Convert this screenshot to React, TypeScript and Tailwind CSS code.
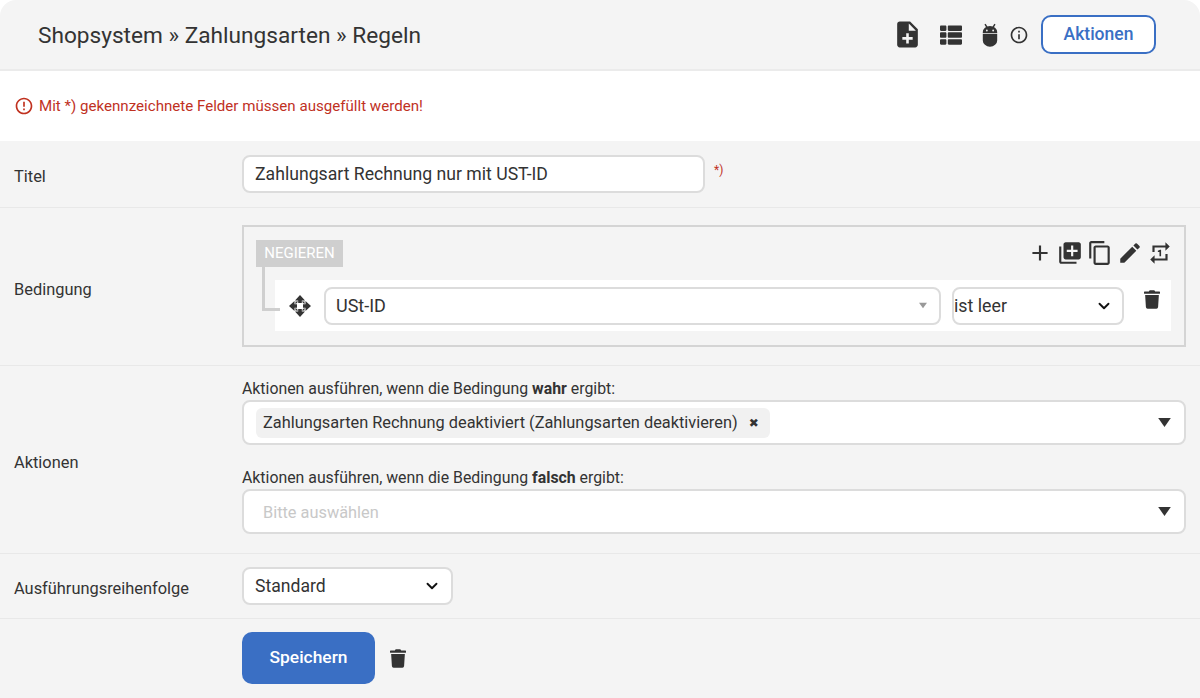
import React from "react";
import { MdNoteAdd, MdInfoOutline, MdAdd, MdLibraryAdd, MdContentCopy, MdEdit, MdRepeatOne, MdErrorOutline } from "react-icons/md";
import { FaThList, FaTrash } from "react-icons/fa";
import { ChevronDown } from "lucide-react";

const Bug = () => (
  <svg viewBox="0 0 20 26" className="w-[18px] h-[24px]" fill="#333">
    <path d="M2 10a8 7 0 0 1 16 0v1H2zM2 12h16v7a8 7 0 0 1-16 0z" />
    <path d="M4.5 1l2.5 4M15.500 1L13 5" stroke="#333" strokeWidth="1.600" />
    <circle cx="6.500" cy="8" r="1" fill="#f4f4f4" />
    <circle cx="13.500" cy="8" r="1" fill="#f4f4f4" />
  </svg>
);

const Move = () => (
  <svg viewBox="0 0 24 24" className="w-[24px] h-[24px] ml-[13px] mr-[12px] shrink-0" fill="#333">
    <path d="M12 1l5 5.500h-3.200V9h-3.600V6.500H7zM12 23l-5-5.500h3.200V15h3.600v2.500H17zM1 12l5.500-5v3.200H9v3.600H6.500V17zM23 12l-5.500 5v-3.200H15v-3.600h2.500V7z" />
    <path d="M7.500 7.500h2.800L7.500 10.300zM16.500 7.500v2.800l-2.800-2.800zM7.500 16.500v-2.800l2.800 2.800zM16.500 16.500h-2.800l2.800-2.800z" />
  </svg>
);

const Caret = ({ big }: { big?: boolean }) => (
  <svg viewBox="0 0 14 10" className={big ? "w-[13px] h-[9px]" : "w-[8px] h-[7px]"} fill={big ? "#333" : "#999"}>
    <path d="M0 0h14L7 10z" />
  </svg>
);

function Row({ label, className, children }: { label: string; className: string; children: React.ReactNode }) {
  return (
    <div className={`flex items-center border-b border-[#e8e8e8] ${className}`}>
      <div className="w-[242px] pl-[14px] pt-[7px] text-[16.400px] text-[#333] shrink-0">{label}</div>
      <div className="flex-1 min-w-0 pr-[14px]">{children}</div>
    </div>
  );
}

export default function App() {
  return (
    <div className="w-[1200px] h-[698px] overflow-hidden bg-[#f4f4f4] text-[#333] rounded-t-[16px]" style={{ fontFamily: "Roboto, sans-serif" }}>
      <header className="h-[71px] flex items-center justify-between border-b-2 border-[#ebebeb] pl-[38px] pr-[44px]">
        <h1 className="text-[22.650px] text-[#333] pt-[2px]">Shopsystem » Zahlungsarten » Regeln</h1>
        <div className="flex items-center">
          <MdNoteAdd className="w-[31px] h-[31px] text-[#333] mr-[17px]" />
          <FaThList className="w-[22px] h-[22px] text-[#333] mr-[19px]" />
          <Bug />
          <MdInfoOutline className="w-[20px] h-[20px] text-[#333] ml-[10px] mr-[12px]" />
          <button className="w-[115px] h-[39px] rounded-[10px] border-2 border-[#3a6fc4] bg-white text-[#3a6fc4] text-[17.500px] font-medium">Aktionen</button>
        </div>
      </header>

      <div className="h-[70px] bg-white flex items-center pl-[14px] text-[#c0311f] text-[15.100px]">
        <MdErrorOutline className="w-[20px] h-[20px] mr-[5px]" />
        Mit *) gekennzeichnete Felder müssen ausgefüllt werden!
      </div>

      <Row label="Titel" className="h-[67px]">
        <div className="flex items-start -mt-[1px]">
          <div className="w-[463px] h-[38px] rounded-[8px] border-2 border-[#dcdcdc] bg-white flex items-center pl-[11px] pt-[1px] text-[17.650px] text-[#333]">Zahlungsart Rechnung nur mit UST-ID</div>
          <span className="ml-[9px] mt-[6px] text-[12px] text-[#c0311f]">*)</span>
        </div>
      </Row>

      <Row label="Bedingung" className="h-[158px]">
        <div className="h-[122px] -mt-[1px] border-2 border-[#d4d4d4] pt-[13px] pl-[12px] pr-[14px] relative">
          <div className="flex items-center justify-between h-[27px]">
            <div className="w-[87px] h-[27px] bg-[#cfcfcf] text-white text-[15px] flex items-center justify-center">NEGIEREN</div>
            <div className="flex items-center gap-[4px] -mr-[3px] -mt-[1px] text-[#333]">
              <MdAdd className="w-[26px] h-[26px]" />
              <MdLibraryAdd className="w-[26px] h-[26px]" />
              <MdContentCopy className="w-[26px] h-[26px]" />
              <MdEdit className="w-[26px] h-[26px]" />
              <MdRepeatOne className="w-[26px] h-[26px]" />
            </div>
          </div>
          <div className="absolute z-10 left-[18px] top-[39px] w-[18px] h-[45px] border-l-[3px] border-b-[3px] border-[#cfcfcf]" />
          <div className="ml-[19px] mt-[13px] -mr-[1px] h-[51px] bg-white flex items-center pr-[10px] relative">
            <Move />
            <div className="w-[617px] h-[38px] rounded-[8px] border-2 border-[#dcdcdc] bg-white flex items-center justify-between pl-[10px] pr-[12px] text-[18px] text-[#333]">
              USt-ID
              <Caret />
            </div>
            <div className="ml-[11px] w-[172px] h-[38px] rounded-[8px] border-2 border-[#dcdcdc] bg-white flex items-center justify-between pr-[9px] text-[17.800px] text-[#333]">
              <span className="pt-[1px]">ist leer</span>
              <ChevronDown className="w-[18px] h-[18px] text-[#111]" strokeWidth={2.500} />
            </div>
            <FaTrash className="w-[16px] h-[19px] ml-[20px] -mt-[12px] text-[#333]" />
          </div>
        </div>
      </Row>

      <Row label="Aktionen" className="h-[188px]">
        <div className="pb-[5px]">
          <div className="text-[15.850px] text-[#333] leading-[18px] mb-[2px]">Aktionen ausführen, wenn die Bedingung <b>wahr</b> ergibt:</div>
          <div className="h-[45px] rounded-[8px] border-2 border-[#dcdcdc] bg-white flex items-center justify-between pl-[12px] pr-[13px]">
            <div className="h-[30px] mt-[1px] rounded-[6px] bg-[#f1f1f1] px-[7px] flex items-center text-[16.350px] text-[#333]">
              <span className="pt-[1px]">Zahlungsarten Rechnung deaktiviert (Zahlungsarten deaktivieren)</span>
              <span className="ml-[11px] mr-[4px] text-[12px] leading-none" style={{ fontFamily: "'DejaVu Sans', sans-serif" }}>✖</span>
            </div>
            <Caret big />
          </div>
          <div className="text-[15.850px] text-[#333] leading-[18px] mt-[24px] mb-[2px]">Aktionen ausführen, wenn die Bedingung <b>falsch</b> ergibt:</div>
          <div className="h-[45px] rounded-[8px] border-2 border-[#dcdcdc] bg-white flex items-center justify-between pl-[19px] pr-[13px] text-[16.350px] text-[#c8c8c8]">
            <span className="pt-[3px]">Bitte auswählen</span>
            <Caret big />
          </div>
        </div>
      </Row>

      <Row label="Ausführungsreihenfolge" className="h-[65px]">
        <div className="w-[211px] h-[38px] rounded-[8px] border-2 border-[#dcdcdc] bg-white flex items-center justify-between pl-[11px] pr-[10px] text-[17.600px] text-[#333]">
          Standard
          <ChevronDown className="w-[18px] h-[18px] text-[#111]" strokeWidth={2.500} />
        </div>
      </Row>

      <div className="flex items-center pl-[242px] pt-[13px]">
        <button className="w-[133px] h-[52px] pb-[2px] rounded-[10px] bg-[#3a6fc4] text-white text-[17.400px] font-medium">Speichern</button>
        <FaTrash className="w-[16px] h-[19px] ml-[15px] text-[#333]" />
      </div>
    </div>
  );
}
